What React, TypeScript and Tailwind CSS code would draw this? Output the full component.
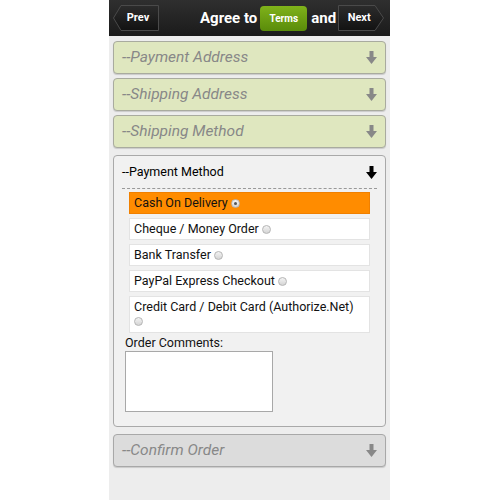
import React from 'react';

const font = { fontFamily: 'Roboto, "Noto Sans", sans-serif' };

function DownArrow({ color }: { color: string }) {
  return (
    <svg width="11" height="13" viewBox="0 0 11 13">
      <rect x="3.5" y="0" width="4" height="7" fill={color} />
      <polygon points="0,6 11,6 5.5,13" fill={color} />
    </svg>
  );
}

function Radio({ checked }: { checked?: boolean }) {
  return (
    <span className="inline-flex items-center justify-center w-[9px] h-[9px] rounded-full border border-[#b5b5b5] bg-gradient-to-b from-[#f4f4f4] to-[#d4d4d4] ml-[3px] align-middle">
      {checked && <span className="w-[3px] h-[3px] rounded-full bg-[#555]" />}
    </span>
  );
}

function NavButton({ label, dir }: { label: string; dir: 'left' | 'right' }) {
  const pts =
    dir === 'left'
      ? '0.5,13 8,0.5 45.5,0.5 45.5,25.5 8,25.5'
      : '0.5,0.5 37,0.5 45.5,13 37,25.5 0.5,25.5';
  return (
    <div className="relative shrink-0 w-[46px] h-[26px] flex items-center justify-center">
      <svg className="absolute inset-0" width="46" height="26" viewBox="0 0 46 26">
        <defs>
          <linearGradient id={`g-${dir}`} x1="0" y1="0" x2="0" y2="1">
            <stop offset="0" stopColor="#2c2c2c" />
            <stop offset="1" stopColor="#121212" />
          </linearGradient>
        </defs>
        <polygon points={pts} fill={`url(#g-${dir})`} stroke="#4a4a4a" strokeLinejoin="round" />
      </svg>
      <span className={`relative text-white text-[11px] font-bold ${dir === 'left' ? 'pl-[4px]' : 'pr-[4px]'}`}>{label}</span>
    </div>
  );
}

function Collapsed({ title, grey }: { title: string; grey?: boolean }) {
  return (
    <div
      className={`h-[33px] rounded-[4px] border flex items-center justify-between pl-[8px] pr-[8px] shadow-[0_1px_1px_rgba(0,0,0,0.15)] ${
        grey ? 'bg-[#dcdcdc] border-[#a8a8a8]' : 'bg-[#dfe7bf] border-[#a9ab9f]'
      }`}
    >
      <span className="italic text-[15.5px] text-[#888]">{title}</span>
      <DownArrow color="#888" />
    </div>
  );
}

const options = [
  { label: 'Cash On Delivery', checked: true },
  { label: 'Cheque / Money Order' },
  { label: 'Bank Transfer' },
  { label: 'PayPal Express Checkout' },
];

export default function App() {
  return (
    <div className="w-[500px] h-[500px] bg-white overflow-hidden" style={font}>
      <div className="ml-[109px] w-[281px] h-[500px] bg-[#ededed] flex flex-col">
        <div className="h-[36px] bg-gradient-to-b from-[#2f2f2f] to-[#1b1b1b] flex items-center pl-[4px] whitespace-nowrap">
          <NavButton label="Prev" dir="left" />
          <span className="ml-[41px] shrink-0 text-white text-[15px] font-bold">Agree to</span>
          <span className="ml-[3px] shrink-0 w-[47px] h-[25px] rounded-[4px] bg-gradient-to-b from-[#7fb21a] to-[#5a8c0a] flex items-center justify-center text-white text-[10px] font-bold">
            Terms
          </span>
          <span className="ml-[4px] shrink-0 text-white text-[15px] font-bold">and</span>
          <span className="ml-[2px] shrink-0">
            <NavButton label="Next" dir="right" />
          </span>
        </div>

        <div className="flex flex-col px-[4px] pt-[5px]">
          <div className="flex flex-col gap-[4px]">
            <Collapsed title="--Payment Address" />
            <Collapsed title="--Shipping Address" />
            <Collapsed title="--Shipping Method" />
          </div>

          <div className="mt-[7px] h-[272px] rounded-[4px] border border-[#a9a9a9] bg-[#f1f1f1] flex flex-col">
            <div className="h-[32px] flex items-center justify-between pl-[8px] pr-[8px]">
              <span className="text-[12.5px] text-black">--Payment Method</span>
              <DownArrow color="#000" />
            </div>
            <div className="mx-[8px] border-t border-dashed border-[#999]" />
            <div className="flex flex-col gap-[4px] px-[15px] pt-[3px]">
              {options.map((o) => (
                <div
                  key={o.label}
                  className={`h-[22px] flex items-center px-[4px] text-[12.5px] text-[#111] border ${
                    o.checked ? 'bg-[#ff8c00] border-[#f08000]' : 'bg-white border-[#e3e3e3]'
                  }`}
                >
                  {o.label}
                  <Radio checked={o.checked} />
                </div>
              ))}
              <div className="h-[37px] bg-white border border-[#e3e3e3] px-[4px] pt-[2px] text-[12.5px] text-[#111] leading-[16px]">
                Credit Card / Debit Card (Authorize.Net)
                <div className="-ml-[3px] leading-none">
                  <Radio />
                </div>
              </div>
            </div>
            <div className="pl-[11px] pt-[2px] text-[12.5px] text-[#111] leading-[16px]">Order Comments:</div>
            <div className="ml-[11px] w-[148px] h-[61px] bg-white border border-[#a8a8a8]" />
          </div>

          <div className="mt-[7px]">
            <Collapsed title="--Confirm Order" grey />
          </div>
        </div>
      </div>
    </div>
  );
}
